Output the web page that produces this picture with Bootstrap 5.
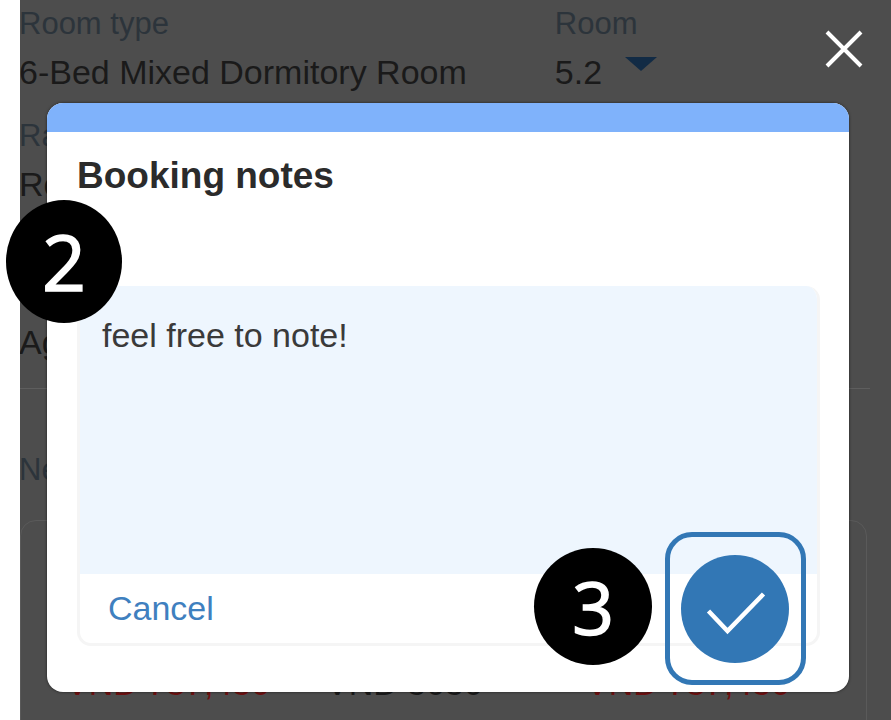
<!DOCTYPE html>
<html lang="en">
<head>
  <meta charset="UTF-8">
  <title>Booking notes</title>
  <meta name="viewport" content="width=device-width, initial-scale=1">
  <link href="https://cdn.jsdelivr.net/npm/bootstrap@5.3.0/dist/css/bootstrap.min.css" rel="stylesheet">
  <style>
    body {
      background: #fff;
      font-family: "Liberation Sans", Arial, sans-serif;
      overflow: hidden;
    }
    .screen { position: relative; height: 720px; }
    .stage {
      height: 720px;
      margin-left: 20px;
      background: #4d4d4d;
      overflow: hidden;
    }
    .bg-rows { margin-left: -1px; padding-top: 6px; }
    .field-label { color: #2c343b; font-size: 31px; line-height: 36px; }
    .field-value { color: #1a1a1a; font-size: 34px; line-height: 40px; margin-top: 10px; white-space: nowrap; }
    .room-col { margin-left: 88px; }
    .room-arrow {
      display: inline-block;
      margin-left: 23px;
      vertical-align: 13px;
      border-left: 16px solid transparent;
      border-right: 16px solid transparent;
      border-top: 14px solid #122b45;
    }
    .rate-row { margin-top: 26px; }
    .age-row { margin-top: 118px; }
    .bg-line { border-top: 1px solid #5e5e5e; margin-top: 26px; width: 851px; }
    .need-row { margin-top: 63px; }
    .bg-card {
      margin-top: 32px;
      margin-left: 1px;
      width: 847px;
      height: 240px;
      padding: 142px 0 0 45px;
      border: 1px solid #5a5a5a;
      border-radius: 16px;
    }
    .price-cell { width: 260px; font-size: 34px; line-height: 40px; color: #1a1a1a; }
    .price-red { color: #6e1010; }
    .close-x { position: absolute; left: 825px; top: 30px; }
    .sheet {
      position: absolute;
      left: 47px;
      top: 103px;
      width: 802px;
      height: 589px;
      background: #fff;
      border-radius: 16px;
      overflow: hidden;
      box-shadow: 0 0 3px rgba(0,0,0,.6);
    }
    .sheet-bar { height: 29px; background: #7fb2fb; }
    .sheet-title { font-size: 37px; line-height: 40px; font-weight: 700; color: #2b2b2b; margin: 24px 0 0 30px; }
    .note-box {
      margin: 90px 0 0 30px;
      width: 743px;
      height: 360px;
      border: 3px solid #f5f5f5;
      border-top: 0;
      border-radius: 14px;
      overflow: hidden;
      display: flex;
      flex-direction: column;
    }
    .note-text {
      flex: 1;
      background: #eef6fe;
      color: #3a3a3a;
      font-size: 34px;
      line-height: 40px;
      padding: 29px 22px;
    }
    .note-foot { height: 69px; padding-left: 28px; display: flex; align-items: center; }
    .cancel-link { color: #3f80bf; font-size: 34px; text-decoration: none; }
    .confirm-frame {
      position: absolute;
      left: 665px;
      top: 532px;
      width: 141px;
      height: 153px;
      border: 5px solid #3277b5;
      border-radius: 27px;
      display: flex;
      align-items: center;
      justify-content: center;
    }
    .confirm-btn {
      width: 108px;
      height: 108px;
      margin-right: 1px;
      padding: 0;
      border: 0;
      border-radius: 50%;
      background: #3277b5;
      display: flex;
      align-items: center;
      justify-content: center;
    }
    .step-badge {
      position: absolute;
      border-radius: 50%;
      background: #000;
      color: #fff;
      font-family: "Open Sans", sans-serif;
      -webkit-text-stroke: 1.5px #fff;
      line-height: 1;
      display: flex;
      align-items: center;
      justify-content: center;
    }
    .step-two { left: 6px; top: 200px; width: 116px; height: 123px; font-size: 77px; }
    .step-three { left: 534px; top: 548px; width: 118px; height: 117px; font-size: 73px; }
  </style>
</head>
<body>
  <div class="screen">
    <div class="stage">
      <div class="bg-rows">
        <div class="d-flex">
          <div>
            <div class="field-label">Room type</div>
            <div class="field-value">6-Bed Mixed Dormitory Room</div>
          </div>
          <div class="room-col">
            <div class="field-label">Room</div>
            <div class="field-value">5.2<span class="room-arrow"></span></div>
          </div>
        </div>
        <div class="field-label rate-row">Rate</div>
        <div class="field-value">Room</div>
        <div class="field-value age-row">Age</div>
        <div class="bg-line"></div>
        <div class="field-label need-row">Need</div>
        <div class="bg-card d-flex">
          <div class="price-cell price-red">VND 787,450</div>
          <div class="price-cell">VND 5050</div>
          <div class="price-cell price-red">VND 787,450</div>
        </div>
      </div>
    </div>

    <svg class="close-x" width="38" height="38" viewBox="0 0 38 38" aria-hidden="true">
      <path d="M2 2 36 36M36 2 2 36" stroke="#fff" stroke-width="4" fill="none"/>
    </svg>

    <div class="sheet">
      <div class="sheet-bar"></div>
      <div class="sheet-title">Booking notes</div>
      <div class="note-box">
        <div class="note-text">feel free to note!</div>
        <div class="note-foot"><a href="#" class="cancel-link">Cancel</a></div>
      </div>
    </div>

    <div class="confirm-frame">
      <button type="button" class="confirm-btn" aria-label="Confirm">
        <svg width="64" height="54" viewBox="0 0 64 54" aria-hidden="true">
          <path d="M5.5 29 24.5 49 60.5 12" stroke="#fff" stroke-width="4.5" fill="none"/>
        </svg>
      </button>
    </div>

    <div class="step-badge step-two">2</div>
    <div class="step-badge step-three">3</div>
  </div>
</body>
</html>
